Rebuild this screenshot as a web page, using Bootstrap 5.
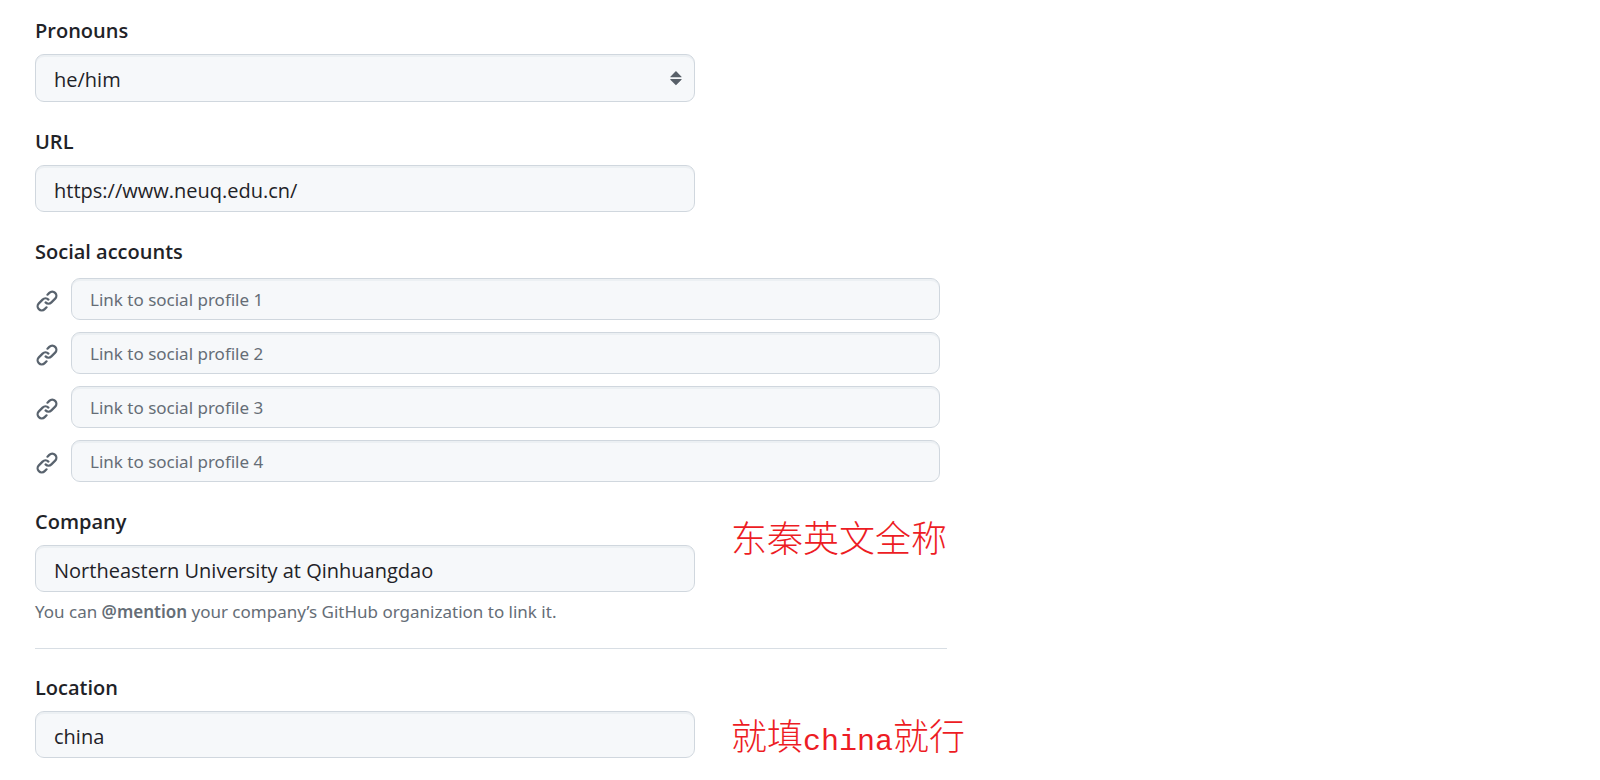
<!DOCTYPE html>
<html lang="en">
<head>
<meta charset="utf-8">
<meta name="viewport" content="width=device-width, initial-scale=1">
<title>Public profile</title>
<link href="https://cdn.jsdelivr.net/npm/bootstrap@5.3.0/dist/css/bootstrap.min.css" rel="stylesheet">
<style>
  body { font-family: "Open Sans", "Noto Sans", "Noto Sans CJK SC", sans-serif; color: #1f2328; background: #fff; }
  .profile-form { padding: 19px 35px; }
  .field { max-width: 660px; }
  .wide { max-width: 912px; }
  .block { margin-bottom: 28px; }
  .form-label { display: block; font-size: 20px; line-height: 24px; font-weight: 600; margin-bottom: 11px; }
  .form-control, .form-select {
    height: 47px; padding: 4px 18px 0; font-size: 20px; line-height: 28px; color: #1f2328;
    background-color: #f6f8fa; border: 1px solid #d0d7de; border-radius: 9px;
    box-shadow: inset 0 2px 0 rgba(208, 215, 222, .25);
  }
  .form-select {
    height: 48px;
    background-image: url("data:image/svg+xml,%3Csvg xmlns='http://www.w3.org/2000/svg' viewBox='0 0 16 16'%3E%3Cpath fill='%23586069' d='m4.074 9.427 3.396 3.396a.25.25 0 0 0 .354 0l3.396-3.396A.25.25 0 0 0 11.043 9H4.251a.25.25 0 0 0-.177.427ZM4.074 7.47 7.47 4.073a.25.25 0 0 1 .354 0L11.22 7.47a.25.25 0 0 1-.177.426H4.251a.25.25 0 0 1-.177-.426Z'/%3E%3C/svg%3E");
    background-size: 25px 25px; background-position: right 5px top 10px;
  }
  .social-list { gap: 12px; padding-right: 7px; }
  .social-item { gap: 12px; }
  .social-item .form-control, .hint { font-family: "Noto Sans", sans-serif; font-size: 17px; }
  .social-item .form-control { height: 42px; padding-top: 0; }
  .form-control::placeholder { color: #656d76; opacity: 1; }
  .link-icon { width: 24px; height: 24px; margin-top: 4px; fill: #59636e; }
  legend.form-label { margin-bottom: 14px; }
  .hint { line-height: 24px; color: #656d76; margin: 8px 0 0; }
  .rule { border-top: 1px solid #d8dee4; opacity: 1; margin: 24px 0 27px; }
  .noted { gap: 36px; }
  .note { font-size: 36px; line-height: 48px; padding-top: 2px; font-weight: 300; color: #ed1c24; font-family: "Noto Sans CJK SC", sans-serif; }
  .note-latin { font-family: "Liberation Mono", monospace; font-size: 30px; line-height: 1; font-weight: 400; }
</style>
</head>
<body>
<svg class="d-none" xmlns="http://www.w3.org/2000/svg">
  <symbol id="link" viewBox="0 0 16 16"><path d="m7.775 3.275 1.25-1.25a3.5 3.5 0 1 1 4.95 4.95l-2.5 2.5a3.5 3.5 0 0 1-4.95 0 .751.751 0 0 1 .018-1.042.751.751 0 0 1 1.042-.018 1.998 1.998 0 0 0 2.83 0l2.5-2.5a2.002 2.002 0 0 0-2.83-2.83l-1.25 1.25a.751.751 0 0 1-1.042-.018.751.751 0 0 1-.018-1.042Zm-4.69 9.64a1.998 1.998 0 0 0 2.83 0l1.25-1.25a.751.751 0 0 1 1.042.018.751.751 0 0 1 .018 1.042l-1.25 1.25a3.5 3.5 0 1 1-4.95-4.95l2.5-2.5a3.5 3.5 0 0 1 4.95 0 .751.751 0 0 1-.018 1.042.751.751 0 0 1-1.042.018 1.998 1.998 0 0 0-2.83 0l-2.5 2.5a1.998 1.998 0 0 0 0 2.83Z"/></symbol>
</svg>
<form class="profile-form">
  <div class="field block">
    <label class="form-label" for="pronouns">Pronouns</label>
    <select class="form-select" id="pronouns">
      <option>they/them</option><option>she/her</option><option selected>he/him</option>
    </select>
  </div>
  <div class="field block">
    <label class="form-label" for="url">URL</label>
    <input class="form-control" id="url" type="url" value="https://www.neuq.edu.cn/">
  </div>
  <fieldset class="wide block">
    <legend class="form-label">Social accounts</legend>
    <div class="social-list d-flex flex-column">
      <div class="social-item d-flex align-items-center">
        <svg class="link-icon flex-shrink-0" aria-hidden="true"><use href="#link"/></svg>
        <input class="form-control" type="text" aria-label="Link to social profile 1" placeholder="Link to social profile 1">
      </div>
      <div class="social-item d-flex align-items-center">
        <svg class="link-icon flex-shrink-0" aria-hidden="true"><use href="#link"/></svg>
        <input class="form-control" type="text" aria-label="Link to social profile 2" placeholder="Link to social profile 2">
      </div>
      <div class="social-item d-flex align-items-center">
        <svg class="link-icon flex-shrink-0" aria-hidden="true"><use href="#link"/></svg>
        <input class="form-control" type="text" aria-label="Link to social profile 3" placeholder="Link to social profile 3">
      </div>
      <div class="social-item d-flex align-items-center">
        <svg class="link-icon flex-shrink-0" aria-hidden="true"><use href="#link"/></svg>
        <input class="form-control" type="text" aria-label="Link to social profile 4" placeholder="Link to social profile 4">
      </div>
    </div>
  </fieldset>
  <div class="noted d-flex align-items-start">
    <div class="field flex-grow-1">
      <label class="form-label" for="company">Company</label>
      <input class="form-control" id="company" type="text" value="Northeastern University at Qinhuangdao">
      <p class="hint">You can <b class="fw-semibold">@mention</b> your company’s GitHub organization to link it.</p>
    </div>
    <div class="note text-nowrap" lang="zh-CN">东秦英文全称</div>
  </div>
  <hr class="rule wide">
  <div class="noted d-flex align-items-end">
    <div class="field flex-grow-1">
      <label class="form-label" for="location">Location</label>
      <input class="form-control" id="location" type="text" value="china">
    </div>
    <div class="note text-nowrap" lang="zh-CN">就填<span class="note-latin">china</span>就行</div>
  </div>
</form>
<script src="https://cdn.jsdelivr.net/npm/bootstrap@5.3.0/dist/js/bootstrap.bundle.min.js"></script>
</body>
</html>
